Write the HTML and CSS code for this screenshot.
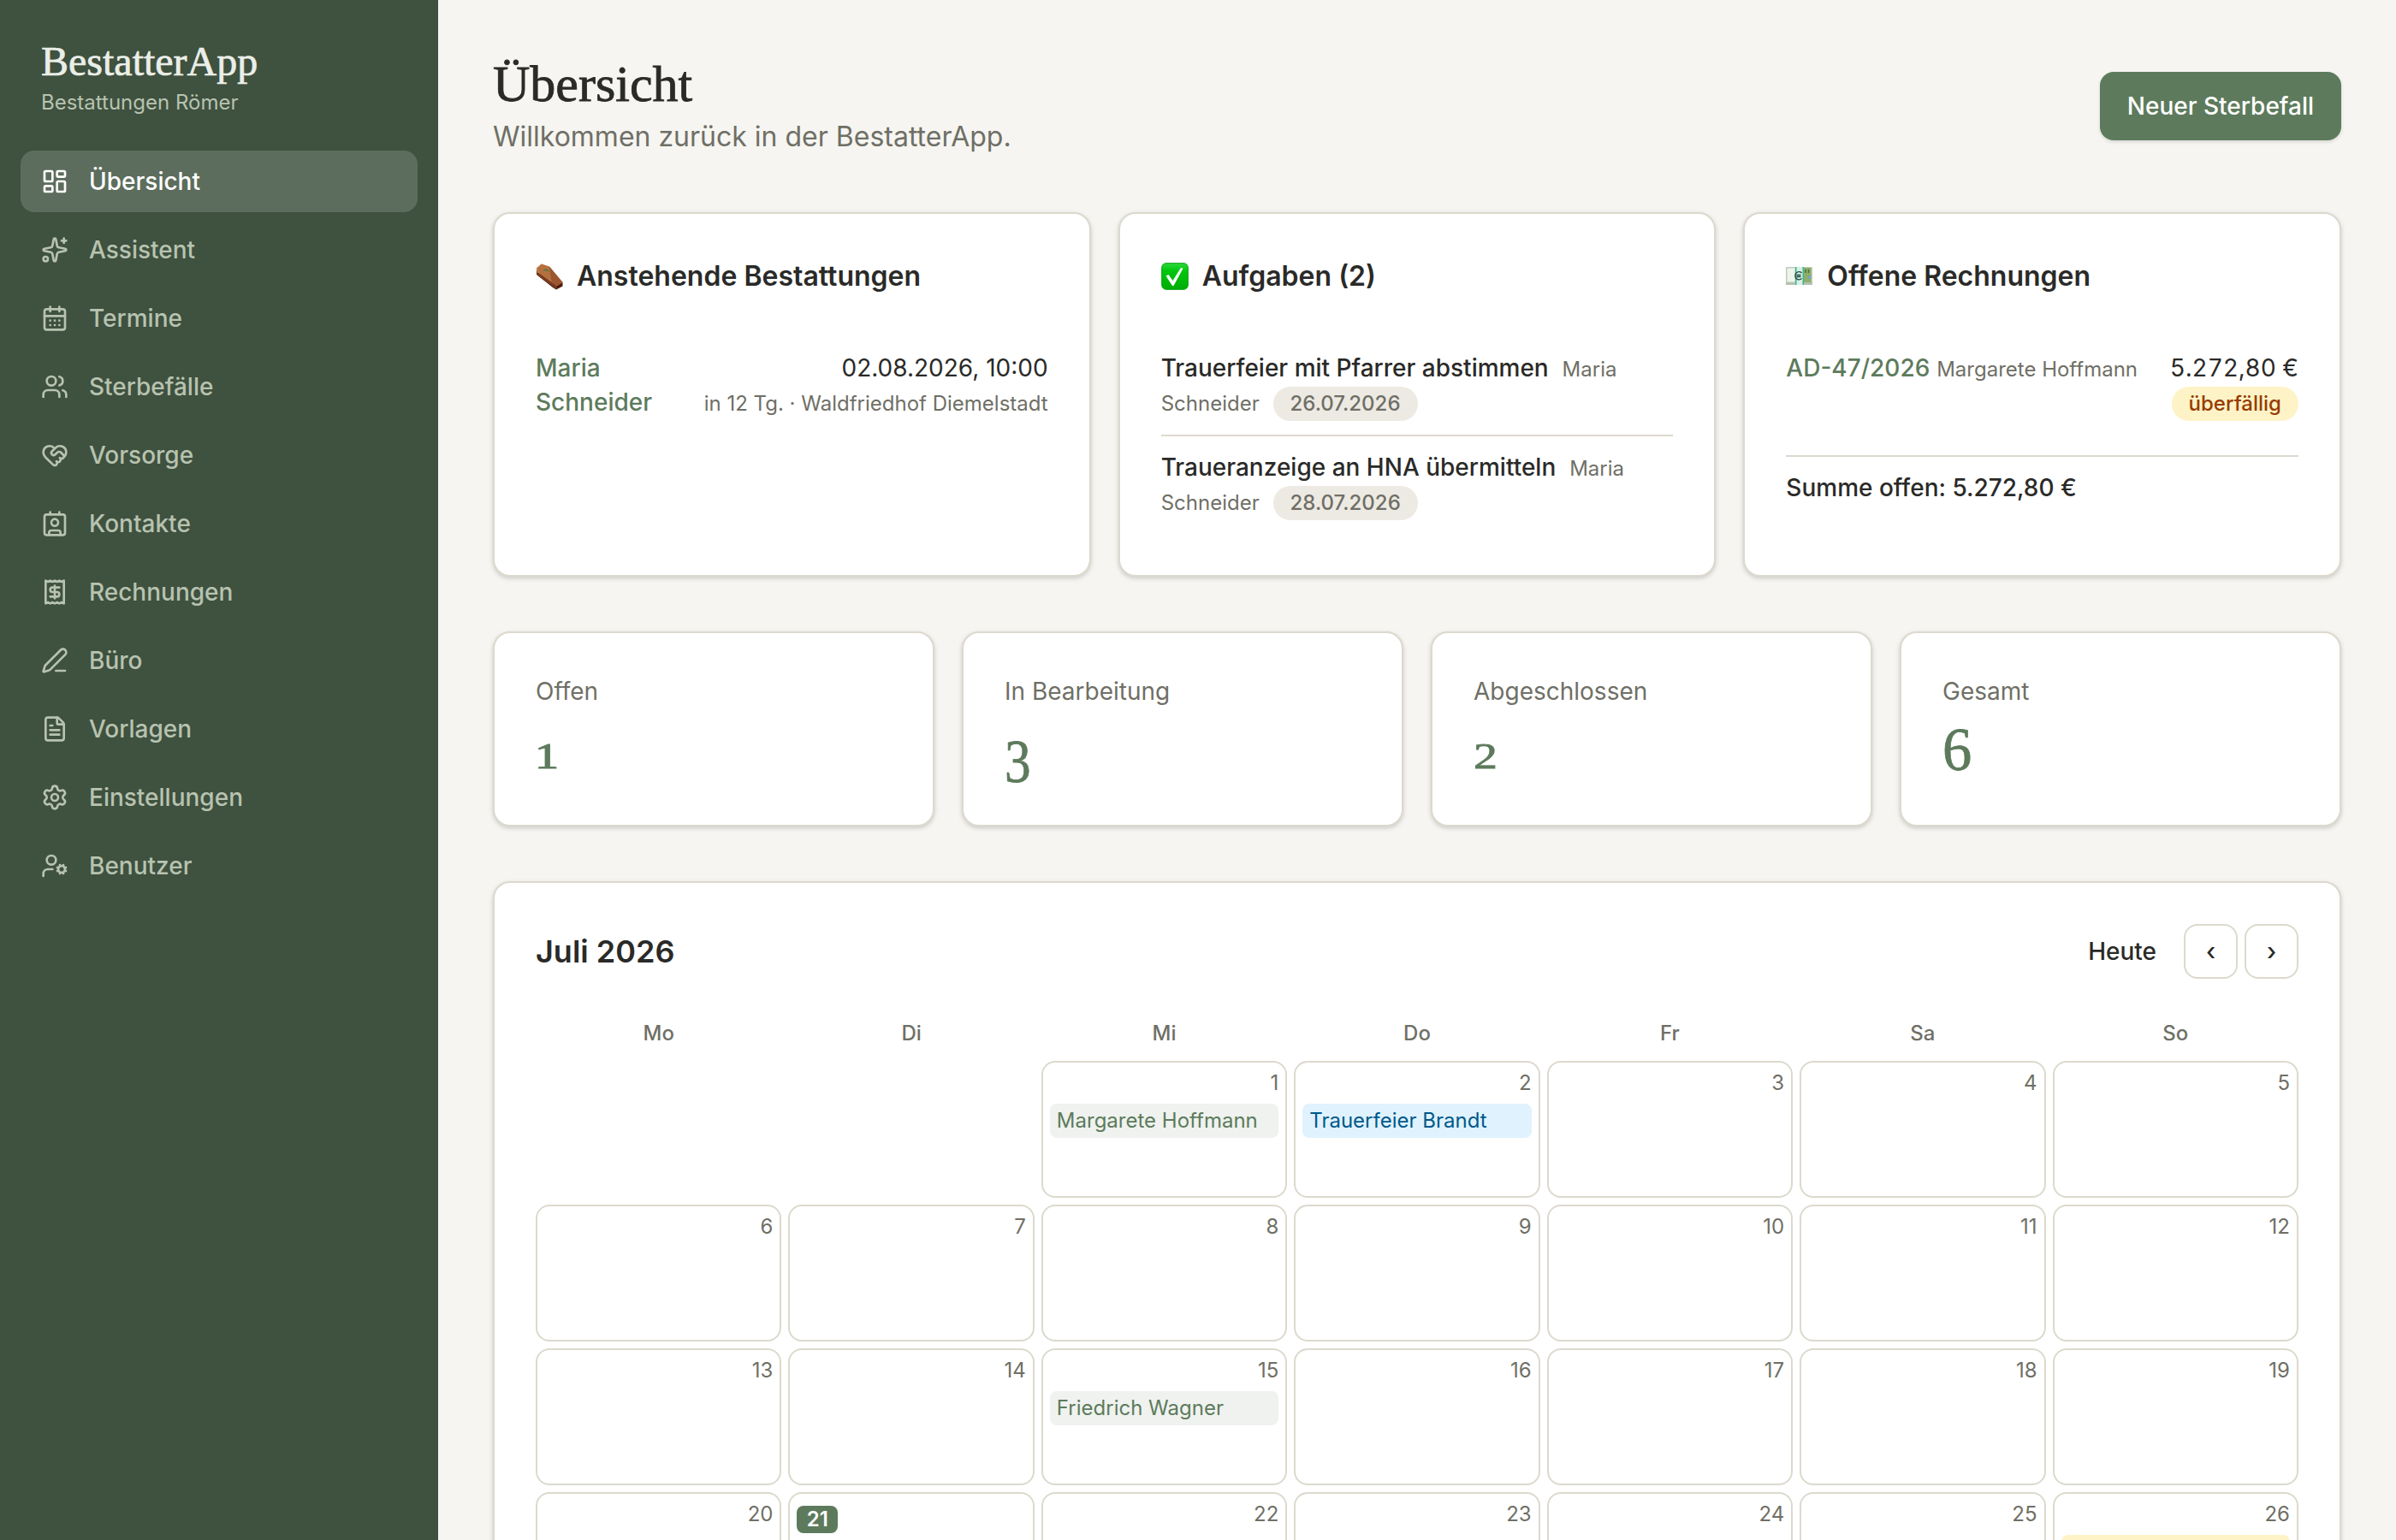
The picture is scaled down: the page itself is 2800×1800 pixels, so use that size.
FILE: index.html
```html
<!DOCTYPE html>
<html lang="de">
<head>
    <meta charset="UTF-8">
    <meta name="viewport" content="width=device-width, initial-scale=1.0">
    <title>BestatterApp – Übersicht</title>
    <link rel="stylesheet" href="styles.css">
</head>
<body>
    <aside class="sidebar">
        <div class="brand">
            <div class="brand-name">BestatterApp</div>
            <div class="brand-sub">Bestattungen Römer</div>
        </div>
        <nav class="nav">
            <a class="nav-item active">
                <svg class="icon" viewBox="0 0 24 24"><rect width="7" height="9" x="3" y="3" rx="1"/><rect width="7" height="5" x="14" y="3" rx="1"/><rect width="7" height="9" x="14" y="12" rx="1"/><rect width="7" height="5" x="3" y="16" rx="1"/></svg>
                Übersicht
            </a>
            <a class="nav-item">
                <svg class="icon" viewBox="0 0 24 24"><path d="M11.017 2.814a1 1 0 0 1 1.966 0l1.051 5.558a2 2 0 0 0 1.594 1.594l5.558 1.051a1 1 0 0 1 0 1.966l-5.558 1.051a2 2 0 0 0-1.594 1.594l-1.051 5.558a1 1 0 0 1-1.966 0l-1.051-5.558a2 2 0 0 0-1.594-1.594l-5.558-1.051a1 1 0 0 1 0-1.966l5.558-1.051a2 2 0 0 0 1.594-1.594z"/><path d="M20 2v4M22 4h-4"/><circle cx="4" cy="20" r="2"/></svg>
                Assistent
            </a>
            <a class="nav-item">
                <svg class="icon" viewBox="0 0 24 24"><path d="M8 2v4M16 2v4"/><rect width="18" height="18" x="3" y="4" rx="2"/><path d="M3 10h18M8 14h.01M12 14h.01M16 14h.01M8 18h.01M12 18h.01M16 18h.01"/></svg>
                Termine
            </a>
            <a class="nav-item">
                <svg class="icon" viewBox="0 0 24 24"><path d="M16 21v-2a4 4 0 0 0-4-4H6a4 4 0 0 0-4 4v2"/><path d="M16 3.128a4 4 0 0 1 0 7.744"/><path d="M22 21v-2a4 4 0 0 0-3-3.87"/><circle cx="9" cy="7" r="4"/></svg>
                Sterbefälle
            </a>
            <a class="nav-item">
                <svg class="icon" viewBox="0 0 24 24"><path d="M19.414 14.414C21 12.828 22 11.5 22 9.5a5.5 5.5 0 0 0-9.591-3.676.6.6 0 0 1-.818.001A5.5 5.5 0 0 0 2 9.5c0 2.3 1.5 4 3 5.5l5.535 5.362a2 2 0 0 0 2.879.052 2.12 2.12 0 0 0-.004-3 2.124 2.124 0 1 0 3-3 2.124 2.124 0 0 0 3.004 0 2 2 0 0 0 0-2.828l-1.881-1.882a2.41 2.41 0 0 0-3.409 0l-1.71 1.71a2 2 0 0 1-2.828 0 2 2 0 0 1 0-2.828l2.823-2.762"/></svg>
                Vorsorge
            </a>
            <a class="nav-item">
                <svg class="icon" viewBox="0 0 24 24"><path d="M16 2v2M8 2v2"/><path d="M7 22v-2a2 2 0 0 1 2-2h6a2 2 0 0 1 2 2v2"/><circle cx="12" cy="11" r="3"/><rect x="3" y="4" width="18" height="18" rx="2"/></svg>
                Kontakte
            </a>
            <a class="nav-item">
                <svg class="icon" viewBox="0 0 24 24"><path d="M4 2v20l2-1 2 1 2-1 2 1 2-1 2 1 2-1 2 1V2l-2 1-2-1-2 1-2-1-2 1-2-1-2 1Z"/><path d="M16 8h-6a2 2 0 1 0 0 4h4a2 2 0 1 1 0 4H8"/><path d="M12 17.5v-11"/></svg>
                Rechnungen
            </a>
            <a class="nav-item">
                <svg class="icon" viewBox="0 0 24 24"><path d="M13 21h8"/><path d="M21.174 6.812a1 1 0 0 0-3.986-3.987L3.842 16.174a2 2 0 0 0-.5.83l-1.321 4.352a.5.5 0 0 0 .623.622l4.353-1.32a2 2 0 0 0 .83-.497z"/></svg>
                Büro
            </a>
            <a class="nav-item">
                <svg class="icon" viewBox="0 0 24 24"><path d="M6 22a2 2 0 0 1-2-2V4a2 2 0 0 1 2-2h8a2.4 2.4 0 0 1 1.704.706l3.588 3.588A2.4 2.4 0 0 1 20 8v12a2 2 0 0 1-2 2z"/><path d="M14 2v5a1 1 0 0 0 1 1h5"/><path d="M10 9H8M16 13H8M16 17H8"/></svg>
                Vorlagen
            </a>
            <a class="nav-item">
                <svg class="icon" viewBox="0 0 24 24"><path d="M9.671 4.136a2.34 2.34 0 0 1 4.659 0 2.34 2.34 0 0 0 3.319 1.915 2.34 2.34 0 0 1 2.33 4.033 2.34 2.34 0 0 0 0 3.831 2.34 2.34 0 0 1-2.33 4.033 2.34 2.34 0 0 0-3.319 1.915 2.34 2.34 0 0 1-4.659 0 2.34 2.34 0 0 0-3.32-1.915 2.34 2.34 0 0 1-2.33-4.033 2.34 2.34 0 0 0 0-3.831A2.34 2.34 0 0 1 6.35 6.051a2.34 2.34 0 0 0 3.319-1.915"/><circle cx="12" cy="12" r="3"/></svg>
                Einstellungen
            </a>
            <a class="nav-item">
                <svg class="icon" viewBox="0 0 24 24"><path d="M10 15H6a4 4 0 0 0-4 4v2"/><path d="m14.305 16.53.923-.382M15.228 13.852l-.923-.383M16.852 12.228l-.383-.923M16.852 17.772l-.383.924M19.148 12.228l.383-.923M19.53 18.696l-.382-.924M20.772 13.852l.924-.383M20.772 16.148l.924.383"/><circle cx="18" cy="15" r="3"/><circle cx="9" cy="7" r="4"/></svg>
                Benutzer
            </a>
        </nav>
    </aside>

    <main class="main">
        <header class="page-header">
            <div>
                <h1>Übersicht</h1>
                <p class="welcome">Willkommen zurück in der BestatterApp.</p>
            </div>
            <button class="btn-primary">Neuer Sterbefall</button>
        </header>

        <section class="cards">
            <div class="card">
                <h2 class="card-title">
                    <svg class="emoji" viewBox="0 0 32 32">
                        <path d="M1 7v7l19 15 4 2.500 7.500-4V23z" fill="#4a1c0e"/>
                        <path d="M1 6.500 7 1.500l9 3 15.500 18.500-7 4.500L3 12z" fill="#b5703f"/>
                        <path d="M16 4.500 31.500 23l-7 4.500-6-5z" fill="#9c5630"/>
                        <path d="M1 6.500 3 12l21.500 15.500V31L5 17 1 13z" fill="#7a3c20"/>
                        <path d="M7 1.500 1 6.500 3 12" fill="none" stroke="#d99a68" stroke-width="1"/>
                        <path d="m8 9 4-2 5 3.500-4-.5z" fill="#5f7a3b"/>
                    </svg>
                    Anstehende Bestattungen
                </h2>
                <div class="row">
                    <a class="link">Maria Schneider</a>
                    <div class="right">
                        02.08.2026, 10:00<br>
                        <span class="muted">in 12 Tg. · Waldfriedhof Diemelstadt</span>
                    </div>
                </div>
            </div>

            <div class="card">
                <h2 class="card-title">
                    <svg class="emoji" viewBox="0 0 32 32">
                        <defs><linearGradient id="green" x1="0" y1="0" x2="0" y2="1"><stop offset="0" stop-color="#2fd83c"/><stop offset=".3" stop-color="#00c60b"/><stop offset="1" stop-color="#00ad07"/></linearGradient></defs>
                        <rect x="0.7" y="0.7" width="30.6" height="30.6" rx="5" fill="url(#green)" stroke="#05a012" stroke-width="1"/>
                        <path d="M5.500 15.500 8.500 14l5 7L23 6l2.500.8L14.500 27h-1.500z" fill="#fff"/>
                    </svg>
                    Aufgaben (2)
                </h2>
                <ul class="tasks">
                    <li><span class="task">Trauerfeier mit Pfarrer abstimmen</span> <span class="muted gap">Maria Schneider</span> <span class="badge gap">26.07.2026</span></li>
                    <li><span class="task">Traueranzeige an HNA übermitteln</span> <span class="muted gap">Maria Schneider</span> <span class="badge gap">28.07.2026</span></li>
                </ul>
            </div>

            <div class="card">
                <h2 class="card-title">
                    <svg class="emoji" viewBox="0 0 32 32">
                        <rect x="0" y="5" width="31" height="21" rx="1" fill="#bccfb9"/>
                        <rect x="1.500" y="6.500" width="9" height="16" fill="#eef3ec"/>
                        <rect x="0" y="23" width="31" height="3" fill="#b4c0b0"/>
                        <rect x="11" y="5" width="10" height="21" fill="#3cb592"/>
                        <rect x="12.500" y="5" width="7" height="21" fill="#d8efe6"/>
                        <rect x="21" y="6" width="8.500" height="17" fill="#8dae69"/>
                        <path d="M23 8v4M26.500 8v4" stroke="#4c6e3c" stroke-width="1.500"/>
                        <path d="M18.500 12a4.500 4.500 0 1 0 0 6.500M12.500 14.500h5M12.500 16.500h5" fill="none" stroke="#1f4a3d" stroke-width="1.400"/>
                        <circle cx="27.500" cy="17" r="1.700" fill="#6f9fe0"/>
                    </svg>
                    Offene Rechnungen
                </h2>
                <div class="row">
                    <div><a class="link">AD-47/2026</a> <span class="muted">Margarete Hoffmann</span></div>
                    <div class="right amount">5.272,80 €<br><span class="badge overdue">überfällig</span></div>
                </div>
                <div class="sum">Summe offen: 5.272,80 €</div>
            </div>
        </section>

        <section class="stats">
            <div class="card stat"><div class="stat-label">Offen</div><div class="stat-value"><span class="num low one">1</span></div></div>
            <div class="card stat"><div class="stat-label">In Bearbeitung</div><div class="stat-value"><span class="num desc">3</span></div></div>
            <div class="card stat"><div class="stat-label">Abgeschlossen</div><div class="stat-value"><span class="num low">2</span></div></div>
            <div class="card stat"><div class="stat-label">Gesamt</div><div class="stat-value"><span class="num">6</span></div></div>
        </section>

        <section class="card calendar">
            <div class="cal-header">
                <h2 class="cal-title">Juli 2026</h2>
                <div class="cal-nav">
                    <button class="btn-ghost">Heute</button>
                    <button class="btn-outline">‹</button>
                    <button class="btn-outline">›</button>
                </div>
            </div>
            <div class="weekdays">
                <div>Mo</div><div>Di</div><div>Mi</div><div>Do</div><div>Fr</div><div>Sa</div><div>So</div>
            </div>
            <div class="days">
                <div class="empty"></div>
                <div class="empty"></div>
                <div class="day"><div class="no">1</div><div class="event">Margarete Hoffmann</div></div>
                <div class="day"><div class="no">2</div><div class="event blue">Trauerfeier Brandt</div></div>
                <div class="day"><div class="no">3</div></div>
                <div class="day"><div class="no">4</div></div>
                <div class="day"><div class="no">5</div></div>
                <div class="day"><div class="no">6</div></div>
                <div class="day"><div class="no">7</div></div>
                <div class="day"><div class="no">8</div></div>
                <div class="day"><div class="no">9</div></div>
                <div class="day"><div class="no">10</div></div>
                <div class="day"><div class="no">11</div></div>
                <div class="day"><div class="no">12</div></div>
                <div class="day"><div class="no">13</div></div>
                <div class="day"><div class="no">14</div></div>
                <div class="day"><div class="no">15</div><div class="event">Friedrich Wagner</div></div>
                <div class="day"><div class="no">16</div></div>
                <div class="day"><div class="no">17</div></div>
                <div class="day"><div class="no">18</div></div>
                <div class="day"><div class="no">19</div></div>
                <div class="day"><div class="no">20</div></div>
                <div class="day"><div class="today">21</div></div>
                <div class="day"><div class="no">22</div></div>
                <div class="day"><div class="no">23</div></div>
                <div class="day"><div class="no">24</div></div>
                <div class="day"><div class="no">25</div></div>
                <div class="day"><div class="no">26</div><div class="event yellow"></div></div>
            </div>
        </section>
    </main>
</body>
</html>
```
FILE: styles.css
```css
* {
    box-sizing: border-box;
    margin: 0;
    padding: 0;
}
body {
    display: flex;
    height: 100vh;
    overflow: hidden;
    background-color: #f6f5f1;
    color: #2a2a28;
    font-family: Inter, sans-serif;
    font-size: 28px;
    line-height: 40px;
}
button {
    font: inherit;
    font-weight: 500;
    color: inherit;
    background: none;
    border: none;
}

/* Sidebar */
.sidebar {
    width: 512px;
    flex-shrink: 0;
    background-color: #3f513f;
    padding: 40px 24px;
}
.brand {
    padding: 0 24px;
    margin-bottom: 40px;
}
.brand-name {
    font-family: "Liberation Serif", serif;
    font-size: 48px;
    line-height: 64px;
    color: #ebeee8;
    -webkit-text-stroke: 0.7px #ebeee8;
}
.brand-sub {
    font-size: 24px;
    line-height: 32px;
    color: #b7c3b0;
}
.nav {
    display: flex;
    flex-direction: column;
    gap: 8px;
}
.nav-item {
    display: flex;
    align-items: center;
    gap: 24px;
    height: 72px;
    padding: 0 24px;
    border-radius: 16px;
    font-weight: 500;
    color: #b7c3b0;
}
.nav-item.active {
    background-color: #5d6d5d;
    color: white;
}
.icon {
    width: 32px;
    height: 32px;
    fill: none;
    stroke: currentColor;
    stroke-width: 2;
    stroke-linecap: round;
    stroke-linejoin: round;
}

/* Header */
.main {
    flex: 1;
    padding: 64px;
    display: flex;
    flex-direction: column;
    gap: 64px;
}
.page-header {
    display: flex;
    justify-content: space-between;
    align-items: center;
    height: 120px;
    flex-shrink: 0;
}
h1 {
    font-family: "Liberation Serif", serif;
    font-size: 60px;
    line-height: 68px;
    font-weight: 400;
    -webkit-text-stroke: 0.8px #2a2a28;
}
.welcome {
    padding-top: 4px;
    font-size: 32px;
    line-height: 48px;
    color: #6f6f66;
}
.btn-primary {
    height: 80px;
    padding: 0 32px;
    border-radius: 16px;
    background-color: #5d7b5c;
    color: white;
    box-shadow: 0 2px 4px rgba(0, 0, 0, 0.12);
}

/* Cards */
.cards {
    display: grid;
    grid-template-columns: repeat(3, 1fr);
    gap: 32px;
}
.card {
    background-color: white;
    border: 2px solid #dcd9ce;
    border-radius: 20px;
    padding: 48px;
    box-shadow: 0 2px 6px rgba(0, 0, 0, 0.1), 0 2px 4px rgba(0, 0, 0, 0.08);
}
.card-title {
    display: flex;
    align-items: center;
    gap: 16px;
    font-size: 32px;
    line-height: 48px;
    font-weight: 600;
    padding-top: 1px;
    margin-bottom: 47px;
}
.emoji {
    width: 32px;
    height: 32px;
}
.row {
    display: flex;
    justify-content: space-between;
    gap: 32px;
    padding: 16px 0;
}
.link {
    color: #5d7b5c;
    font-weight: 500;
}
.right {
    text-align: right;
    white-space: nowrap;
}
.muted {
    font-size: 24px;
    line-height: 32px;
    color: #6f6f66;
}
.gap {
    margin-left: 8px;
}
.amount {
    font-variant-numeric: tabular-nums;
}
.tasks {
    list-style: none;
}
.tasks li {
    height: 114px;
    padding: 16px 0;
}
.tasks li + li {
    height: 116px;
    border-top: 2px solid #dcd9ce;
}
.task {
    font-weight: 500;
}
.badge {
    display: inline-block;
    padding: 4px 20px;
    border-radius: 20px;
    background-color: #edeae3;
    color: #6f6f66;
    font-size: 24px;
    line-height: 32px;
    font-weight: 500;
}
.badge.overdue {
    background-color: #fef3c6;
    color: #973c00;
}
.sum {
    margin-top: 24px;
    padding-top: 16px;
    border-top: 2px solid #dcd9ce;
    font-weight: 500;
}

/* Stats */
.stats {
    display: grid;
    grid-template-columns: repeat(4, 1fr);
    gap: 32px;
}
.stat-label {
    color: #6f6f66;
}
.stat-value {
    display: flex;
    height: 88px;
    font-family: "Liberation Serif", serif;
    color: #5d7b5c;
}
.num {
    font-size: 72px;
    line-height: 96px;
    -webkit-text-stroke: 0.8px #5d7b5c;
    transform: scaleX(0.95);
    transform-origin: left;
}
/* old-style figures: 1 and 2 at x-height, 3 below the baseline */
.num.low {
    font-size: 43px;
    line-height: 111px;
    transform: scaleX(1.3);
}
.num.one {
    margin-left: -1px;
    -webkit-text-stroke-width: 1.2px;
}
.num.desc {
    line-height: 124px;
    transform: scaleX(0.85);
}

/* Calendar */
.cal-header {
    display: flex;
    justify-content: space-between;
    align-items: center;
    height: 64px;
    margin-bottom: 48px;
}
.cal-title {
    font-size: 36px;
    font-weight: 600;
}
.cal-nav {
    display: flex;
    align-items: center;
    gap: 8px;
}
.btn-ghost {
    padding: 0 24px;
}
.btn-outline {
    width: 63px;
    height: 64px;
    border: 2px solid #dcd9ce;
    border-radius: 16px;
}
.weekdays, .days {
    display: grid;
    grid-template-columns: repeat(7, 1fr);
    gap: 8px;
}
.weekdays {
    margin-bottom: 16px;
    text-align: center;
    font-size: 24px;
    line-height: 32px;
    font-weight: 500;
    color: #6f6f66;
}
.day {
    height: 160px;
    padding: 8px;
    border: 2px solid #dcd9ce;
    border-radius: 16px;
    font-size: 24px;
    line-height: 32px;
}
.no {
    text-align: right;
    color: #6f6f66;
}
.today {
    width: 48px;
    margin-top: 6px;
    border-radius: 8px;
    background-color: #5d7b5c;
    color: white;
    font-weight: 600;
    text-align: center;
}
.event {
    height: 40px;
    margin-top: 8px;
    padding: 4px 8px;
    border-radius: 8px;
    background-color: #eff2ef;
    color: #5d7b5c;
    white-space: nowrap;
}
.event.blue {
    background-color: #dff2fe;
    color: #00598a;
}
.event.yellow {
    background-color: #fef3c6;
}
```
